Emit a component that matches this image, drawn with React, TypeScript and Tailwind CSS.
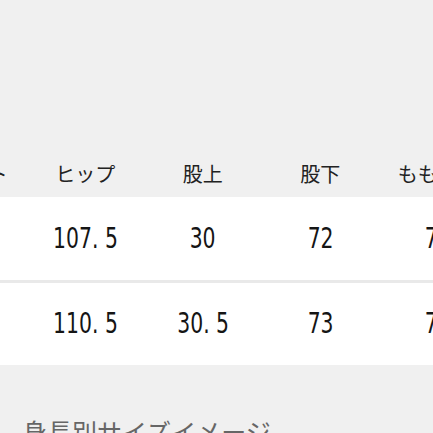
import React from "react";

const cols = [
  { h: "ウエスト", a: "82", b: "85" },
  { h: "ヒップ", a: "107. 5", b: "110. 5" },
  { h: "股上", a: "30", b: "30. 5" },
  { h: "股下", a: "72", b: "73" },
  { h: "もも周り", a: "70", b: "72" },
  { h: "裾幅", a: "20", b: "21" },
];

const jp = { fontFamily: '"Noto Sans CJK JP", "Noto Sans", sans-serif' };
const num = { fontFamily: '"Liberation Sans Narrow", "DejaVu Sans Condensed", "Liberation Sans", sans-serif' };

function Cell({ children }: { children: React.ReactNode }) {
  return (
    <div className="w-[117.5px] shrink-0 text-center whitespace-nowrap">
      <span className="inline-block scale-x-[0.78]">{children}</span>
    </div>
  );
}

export default function App() {
  return (
    <div className="w-[433px] h-[433px] overflow-hidden bg-[#f0f0f0]">
      <div className="h-[150px]" />
      <div className="flex ml-[-91px] h-[47px] items-center text-[20px] text-[#222]" style={jp}>
        {cols.map((c) => (
          <div key={c.h} className="w-[117.5px] shrink-0 text-center whitespace-nowrap">{c.h}</div>
        ))}
      </div>
      <div className="bg-white h-[86px] flex items-center border-b-[3px] border-[#e9e9e9]">
        <div className="flex ml-[-91px] text-[29px] text-[#151515]" style={num}>
          {cols.map((c) => (
            <Cell key={c.h}>{c.a}</Cell>
          ))}
        </div>
      </div>
      <div className="bg-white h-[82px] flex items-center">
        <div className="flex ml-[-91px] text-[29px] text-[#151515]" style={num}>
          {cols.map((c) => (
            <Cell key={c.h}>{c.b}</Cell>
          ))}
        </div>
      </div>
      <div className="pt-[54px] pl-[22px] text-[25px] leading-none text-[#666] whitespace-nowrap" style={jp}>
        身長別サイズイメージ
      </div>
    </div>
  );
}
